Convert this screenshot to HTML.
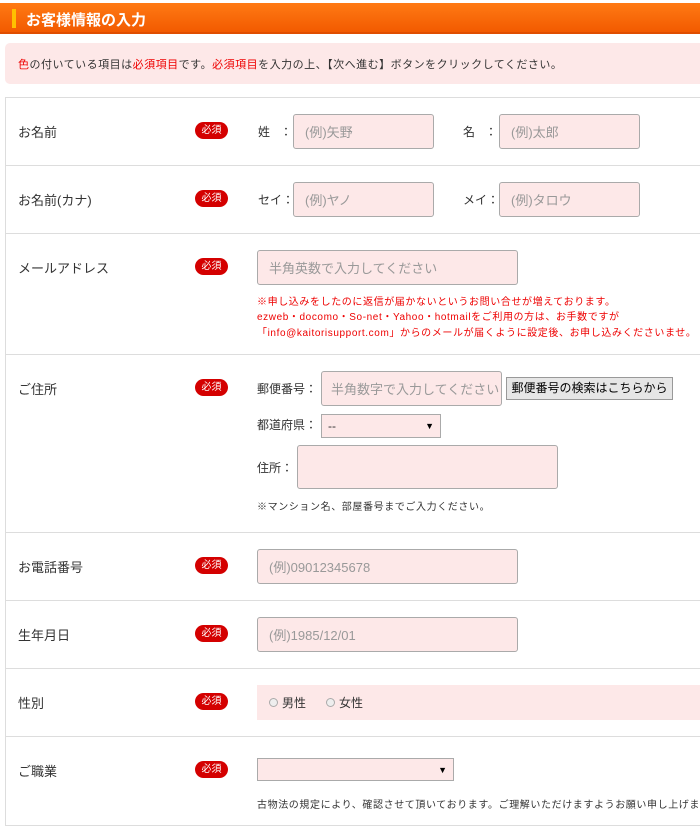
<!DOCTYPE html>
<html><head><meta charset="utf-8"><style>
*{margin:0;padding:0;box-sizing:border-box}
body{width:700px;height:829px;background:#fff;position:relative;overflow:hidden;font-family:"Liberation Sans","Noto Sans CJK JP",sans-serif;color:#333}
.a{position:absolute;white-space:nowrap}
.hd{left:0;top:3px;width:700px;height:31px;background:linear-gradient(#ff7a14,#f25a00);border-bottom:2px solid #e04e00}
.acc{left:12px;top:9px;width:4px;height:19px;background:#ffc000}
.ttl{left:26px;top:9px;color:#fff;font-weight:bold;font-size:15px}
.note{left:5px;top:43px;width:700px;height:41px;background:#fde8e8;border-radius:5px}
.nt{left:18px;top:56px;font-size:11px;color:#333;letter-spacing:0.5px}
.r{color:#e00}
.box{left:5px;top:97px;width:700px;height:729px;border-left:1px solid #ddd;border-top:1px solid #ddd}
.ln{left:5px;width:700px;height:1px;background:#ddd}
.lb{left:18px;font-size:13px;color:#333}
.bd{left:195px;width:33px;height:17px;background:#d40000;color:#fff;border-radius:9px;font-size:10px;text-align:center;line-height:17px}
.in{background:#fde8e8;border:1px solid #aaa;border-radius:3px;color:#999;font-size:13px;padding-left:11px;display:flex;align-items:center;overflow:hidden}
.t{font-size:12px;color:#333}
.rt{font-size:10px;color:#e00;left:257px;letter-spacing:0.6px}
.sm{font-size:10px;color:#333;letter-spacing:0.6px}
.sel{background:#fde8e8;border:1px solid #aaa;font-size:12px;color:#333;padding-left:6px;display:flex;align-items:center}
.sel:after{content:"▼";position:absolute;right:6px;font-size:9px;color:#000}
</style></head><body>
<div class="a hd"></div><div class="a acc"></div><div class="a ttl">お客様情報の入力</div>
<div class="a note"></div>
<div class="a nt"><span class="r">色</span>の付いている項目は<span class="r">必須項目</span>です。<span class="r">必須項目</span>を入力の上、【次へ進む】ボタンをクリックしてください。</div>
<div class="a box"></div>
<div class="a ln" style="top:165px"></div><div class="a ln" style="top:233px"></div><div class="a ln" style="top:354px"></div><div class="a ln" style="top:532px"></div><div class="a ln" style="top:600px"></div><div class="a ln" style="top:668px"></div><div class="a ln" style="top:736px"></div><div class="a ln" style="top:825px"></div>

<div class="a lb" style="top:122px">お名前</div><div class="a bd" style="top:122px">必須</div>
<div class="a t" style="left:258px;top:123px">姓 &nbsp;&nbsp;：</div><div class="a in" style="left:293px;top:114px;width:141px;height:35px">(例)矢野</div>
<div class="a t" style="left:463px;top:123px">名 &nbsp;&nbsp;：</div><div class="a in" style="left:499px;top:114px;width:141px;height:35px">(例)太郎</div>

<div class="a lb" style="top:190px">お名前(カナ)</div><div class="a bd" style="top:190px">必須</div>
<div class="a t" style="left:258px;top:191px">セイ：</div><div class="a in" style="left:293px;top:182px;width:141px;height:35px">(例)ヤノ</div>
<div class="a t" style="left:463px;top:191px">メイ：</div><div class="a in" style="left:499px;top:182px;width:141px;height:35px">(例)タロウ</div>

<div class="a lb" style="top:258px">メールアドレス</div><div class="a bd" style="top:258px">必須</div>
<div class="a in" style="left:257px;top:250px;width:261px;height:35px">半角英数で入力してください</div>
<div class="a rt" style="top:293px">※申し込みをしたのに返信が届かないというお問い合せが増えております。</div>
<div class="a rt" style="top:308px">ezweb・docomo・So-net・Yahoo・hotmailをご利用の方は、お手数ですが</div>
<div class="a rt" style="top:324px">「info@kaitorisupport.com」からのメールが届くように設定後、お申し込みくださいませ。</div>

<div class="a lb" style="top:379px">ご住所</div><div class="a bd" style="top:379px">必須</div>
<div class="a t" style="left:257px;top:380px">郵便番号：</div><div class="a in" style="left:321px;top:371px;width:181px;height:35px;padding-left:9px">半角数字で入力してください</div>
<div class="a" style="left:506px;top:377px;width:167px;height:23px;background:#e6e6e6;border:1px solid #999;font-size:12px;color:#000;text-align:center;line-height:21px">郵便番号の検索はこちらから</div>
<div class="a t" style="left:257px;top:416px">都道府県：</div><div class="a sel" style="left:321px;top:414px;width:120px;height:24px">--</div>
<div class="a t" style="left:257px;top:459px">住所：</div><div class="a in" style="left:297px;top:445px;width:261px;height:44px"></div>
<div class="a sm" style="left:257px;top:498px">※マンション名、部屋番号までご入力ください。</div>

<div class="a lb" style="top:557px">お電話番号</div><div class="a bd" style="top:557px">必須</div>
<div class="a in" style="left:257px;top:549px;width:261px;height:35px">(例)09012345678</div>

<div class="a lb" style="top:625px">生年月日</div><div class="a bd" style="top:625px">必須</div>
<div class="a in" style="left:257px;top:617px;width:261px;height:35px">(例)1985/12/01</div>

<div class="a lb" style="top:693px">性別</div><div class="a bd" style="top:693px">必須</div>
<div class="a" style="left:257px;top:685px;width:450px;height:35px;background:#fde8e8"></div>
<div class="a t" style="left:269px;top:694px"><span style="display:inline-block;width:9px;height:9px;border:1px solid #aaa;border-radius:50%;background:#eee;margin-right:4px"></span>男性 &nbsp;&nbsp;&nbsp;&nbsp;&nbsp;<span style="display:inline-block;width:9px;height:9px;border:1px solid #aaa;border-radius:50%;background:#eee;margin-right:4px"></span>女性</div>

<div class="a lb" style="top:761px">ご職業</div><div class="a bd" style="top:761px">必須</div>
<div class="a sel" style="left:257px;top:758px;width:197px;height:23px"></div>
<div class="a sm" style="left:257px;top:796px">古物法の規定により、確認させて頂いております。ご理解いただけますようお願い申し上げます。</div>
</body></html>
